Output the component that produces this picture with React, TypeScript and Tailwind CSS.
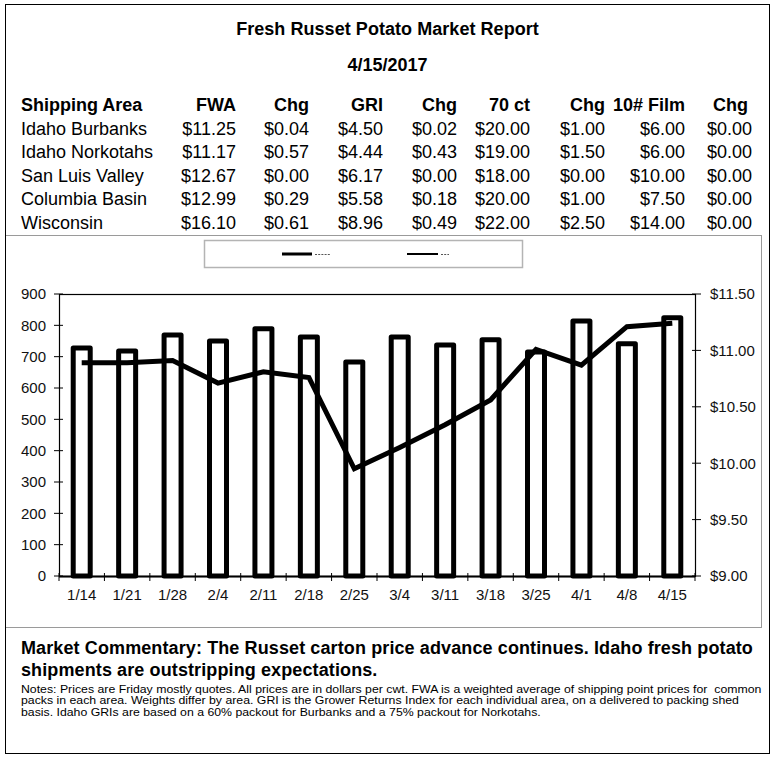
import React from "react";

const cats = ["1/14", "1/21", "1/28", "2/4", "2/11", "2/18", "2/25", "3/4", "3/11", "3/18", "3/25", "4/1", "4/8", "4/15"];
const bars = [736, 726, 777, 758, 797, 771, 691, 771, 745, 762, 723, 822, 749, 832];
const prices = [10.89, 10.89, 10.91, 10.71, 10.81, 10.76, 9.95, 10.14, 10.34, 10.56, 11.01, 10.87, 11.21, 11.24];

const X0 = 59;
const X1 = 695;
const YT = 294;
const YB = 576;
const step = (X1 - X0) / 14;
const cx = (i: number) => X0 + step * (i + 0.5);
const yL = (v: number) => YB - (v / 900) * (YB - YT);
const yR = (p: number) => YB - ((p - 9) / 2.5) * (YB - YT);

const rows = [
  ["Idaho Burbanks", "$11.25", "$0.04", "$4.50", "$0.02", "$20.00", "$1.00", "$6.00", "$0.00"],
  ["Idaho Norkotahs", "$11.17", "$0.57", "$4.44", "$0.43", "$19.00", "$1.50", "$6.00", "$0.00"],
  ["San Luis Valley", "$12.67", "$0.00", "$6.17", "$0.00", "$18.00", "$0.00", "$10.00", "$0.00"],
  ["Columbia Basin", "$12.99", "$0.29", "$5.58", "$0.18", "$20.00", "$1.00", "$7.50", "$0.00"],
  ["Wisconsin", "$16.10", "$0.61", "$8.96", "$0.49", "$22.00", "$2.50", "$14.00", "$0.00"],
];
const headers = ["Shipping Area", "FWA", "Chg", "GRI", "Chg", "70 ct", "Chg", "10# Film", "Chg"];

const gridCols = "grid grid-cols-[149px_66px_73px_74px_74px_73px_75px_80px_67px]";

function Chart() {
  const font = "'Liberation Sans', Arial, sans-serif";
  const leftTicks = [0, 100, 200, 300, 400, 500, 600, 700, 800, 900];
  const rightTicks = [9, 9.5, 10, 10.5, 11, 11.5];
  const linePts = prices.map((p, i) => `${cx(i).toFixed(1)},${yR(p).toFixed(1)}`).join(" ");
  return (
    <svg width="756" height="391" viewBox="5 236 756 391" className="block" style={{ fontFamily: font }}>
      <rect x="204.5" y="240.5" width="318" height="27" fill="white" stroke="#b4b4b4" strokeWidth="1.5" />
      <line x1="282" y1="254" x2="312" y2="254" stroke="black" strokeWidth="3" />
      <line x1="315" y1="254.5" x2="330" y2="254.5" stroke="#555" strokeWidth="1" strokeDasharray="2 1.2" />
      <line x1="407" y1="254" x2="438" y2="254" stroke="black" strokeWidth="2" />
      <line x1="441" y1="254.5" x2="449" y2="254.5" stroke="#555" strokeWidth="1" strokeDasharray="2 1.2" />

      <rect x="59.5" y="294.5" width="636" height="282" fill="white" stroke="black" strokeWidth="1.2" />

      {leftTicks.map((v) => (
        <g key={v}>
          <line x1="54" y1={yL(v)} x2="63" y2={yL(v)} stroke="black" strokeWidth="1" />
          <text x="46" y={yL(v) + 5.4} fontSize="15" textAnchor="end" fill="#111">
            {v}
          </text>
        </g>
      ))}
      {rightTicks.map((p) => (
        <g key={p}>
          <line x1="692" y1={yR(p)} x2="701" y2={yR(p)} stroke="black" strokeWidth="1" />
          <text x="710" y={yR(p) + 5.4} fontSize="15" textAnchor="start" fill="#111">
            ${p.toFixed(2)}
          </text>
        </g>
      ))}
      {Array.from({ length: 15 }).map((_, k) => (
        <line key={k} x1={X0 + step * k} y1="573" x2={X0 + step * k} y2="581" stroke="black" strokeWidth="1" />
      ))}
      {cats.map((c, i) => (
        <text key={c} x={cx(i)} y="599.5" fontSize="15" textAnchor="middle" fill="#111">
          {c}
        </text>
      ))}

      {bars.map((v, i) => (
        <rect
          key={i}
          x={cx(i) - 8.5}
          y={yL(v) + 2.5}
          width="17"
          height={YB - yL(v) - 2.5}
          fill="white"
          stroke="black"
          strokeWidth="5"
          strokeLinejoin="round"
        />
      ))}
      <line x1="59" y1="576.5" x2="695" y2="576.5" stroke="black" strokeWidth="2" />
      <polyline points={linePts} fill="none" stroke="black" strokeWidth="5" strokeLinejoin="miter" />
    </svg>
  );
}

export default function App() {
  return (
    <div className="bg-white w-[778px] h-[761px] pt-[4px] pl-[5px]" style={{ fontFamily: "'Liberation Sans', Arial, sans-serif" }}>
      <div className="w-[765px] h-[750px] border border-black text-black overflow-hidden">
        <div className="pt-[14px] text-center font-bold text-[18px] leading-[20px] tracking-[0.05px]">Fresh Russet Potato Market Report</div>
        <div className="mt-[16px] text-center font-bold text-[18px] leading-[20px]">4/15/2017</div>
        <div className="mt-[19px] pl-[15px] text-[18px] leading-[23.6px]">
          <div className={`${gridCols} font-bold`}>
            {headers.map((h, i) => (
              <div key={i} className={i === 0 ? "text-left" : i === 8 ? "text-right pr-[4px]" : "text-right"}>
                {h}
              </div>
            ))}
          </div>
          {rows.map((r, ri) => (
            <div key={ri} className={gridCols}>
              {r.map((c, i) => (
                <div key={i} className={i === 0 ? "text-left whitespace-nowrap" : "text-right"}>
                  {c}
                </div>
              ))}
            </div>
          ))}
        </div>
        <div className="-mt-[1px] -ml-[2px] w-[758px] h-[393px] border border-[#9a9a9a] bg-white relative">
          <Chart />
        </div>
        <div className="mt-[9px] pl-[15px] font-bold text-[18px] leading-[22px] whitespace-nowrap tracking-[0.11px]">
          <div>Market Commentary: The Russet carton price advance continues. Idaho fresh potato</div>
          <div>shipments are outstripping expectations.</div>
        </div>
        <div className="mt-[3px] pl-[15px] text-[10.5px] leading-[11.7px] whitespace-nowrap">
          <div className="origin-left scale-x-[1.17]">
            <div>Notes: Prices are Friday mostly quotes. All prices are in dollars per cwt. FWA is a weighted average of shipping point prices for&nbsp; common</div>
            <div>packs in each area. Weights differ by area. GRI is the Grower Returns Index for each individual area, on a delivered to packing shed</div>
            <div>basis. Idaho GRIs are based on a 60% packout for Burbanks and a 75% packout for Norkotahs.</div>
          </div>
        </div>
      </div>
    </div>
  );
}
